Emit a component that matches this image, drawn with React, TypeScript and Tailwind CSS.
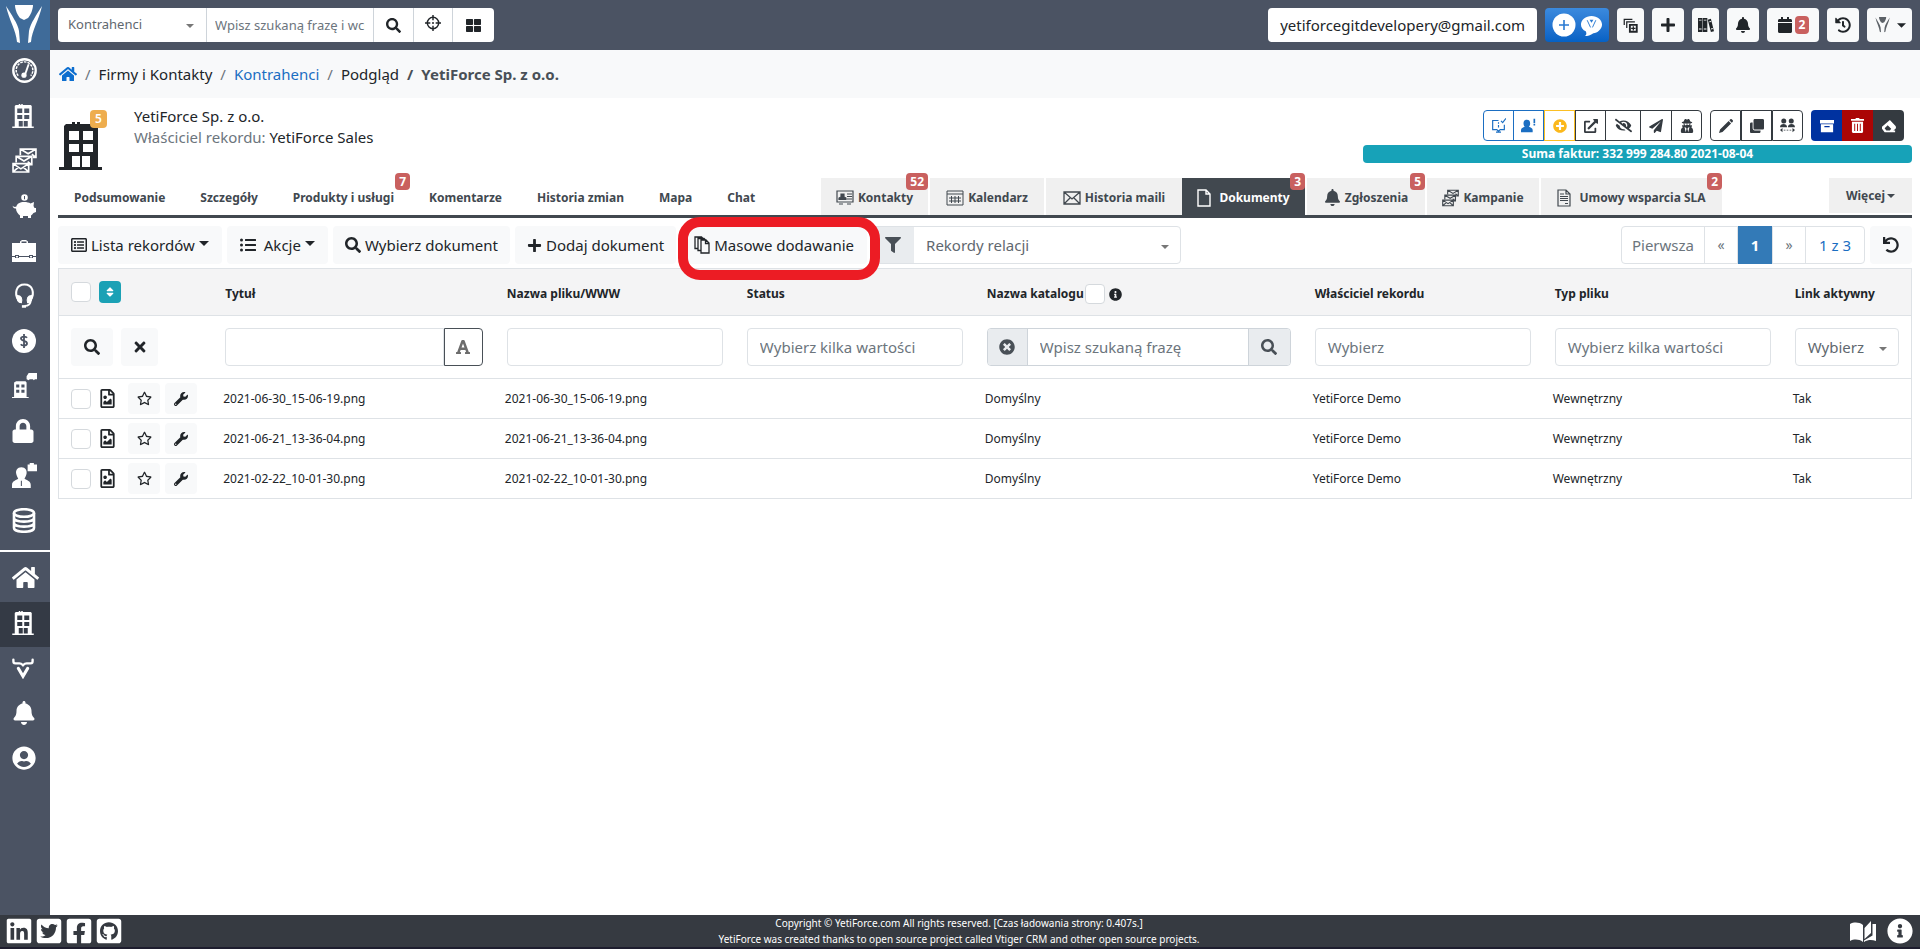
import React from 'react';
import {
  FaBell, FaCalendar, FaClone, FaExternalLinkAlt, FaEyeSlash,
  FaFacebookSquare, FaFilter, FaFont, FaGithubSquare, FaHistory, FaHome, FaInfoCircle, FaLinkedin,
  FaListUl, FaLock, FaPaperPlane, FaPlus, FaPlusCircle, FaRegFileImage, FaRegListAlt, FaRegStar,
  FaSearch, FaSort, FaThLarge, FaTimes, FaTimesCircle, FaTwitterSquare, FaUndo,
  FaUserCircle, FaUserSecret, FaWrench,
} from 'react-icons/fa';

type IconProps = { className?: string };

/* ---------- Custom icons ---------- */

const Caret = ({ className }: IconProps) => (
  <svg viewBox="0 0 10 5" className={className} fill="currentColor" aria-hidden="true">
    <path d="M0 0h10L5 5z" />
  </svg>
);

const YetiLogo = ({ className }: IconProps) => (
  <svg viewBox="0 0 50 50" className={className} fill="currentColor" aria-hidden="true">
    <path d="M15 5h18c0 5-3 11-5 13l-4 2-4-2c-2-2-5-8-5-13z" />
    <path d="M6 6c5 8 12 18 13 25l1 12-3-1C16 30 9 20 6 6z" />
    <path d="M42 6c-5 8-12 18-13 25l-1 12 3-1c1-12 8-22 11-36z" />
  </svg>
);

const BuildingIcon = ({ className }: IconProps) => (
  <svg viewBox="0 0 43 48" className={className} fill="currentColor" aria-hidden="true">
    <path
      fillRule="evenodd"
      d="M13 0h3v2h2V0h3v2h16l2 2v41h4v3H0v-3h5V4l2-2h6zM10 9v9h10V9zM24 9v9h10V9zM10 22v8h10v-8zM24 22v8h10v-8zM13 34v11h8V34zM23 34v11h8V34z"
    />
  </svg>
);

const MailsIcon = ({ className }: IconProps) => (
  <svg viewBox="0 0 24 24" className={className} fill="none" stroke="currentColor" strokeWidth="1.6" aria-hidden="true">
    <path d="M8 7V1h15v8h-3M8 1l7.500 4.500L23 1M23 9l-4-3" />
    <path d="M4 14V8h15v8h-3M4 8l7.500 4.500L19 8M19 16l-4-3" />
    <path d="M1 15h15v8H1zl7.500 5L16 15M1 23l5-4.500M16 23l-5-4.500" />
  </svg>
);

const PigIcon = ({ className }: IconProps) => (
  <svg viewBox="0 0 24 24" className={className} fill="currentColor" aria-hidden="true">
    <path fillRule="evenodd" d="M12.500.2a3.300 3.300 0 1 1 0 6.600 3.300 3.300 0 0 1 0-6.600zM12 2v3.200h1V2z" />
    <path d="M12 8c3 0 5 .5 6.500 1.500L22 8l-.5 4 1 2H24v4l-2.500 1c-1 1-1.500 2-2.500 2.500V24h-3v-2h-5v2H8v-2.500c-2-1.500-4-4-4-7-2 .5-3-1-3.500-3 1 1.500 2 1.500 3.700 1.300C5 9.500 8 8 12 8z" />
  </svg>
);

const BriefcaseIcon = ({ className }: IconProps) => (
  <svg viewBox="0 0 24 24" className={className} fill="currentColor" aria-hidden="true">
    <path
      fillRule="evenodd"
      d="M8 4V2.500L10 1h4l2 1.500V4h8v13h-3v-1h-4v1H7v-1H3v1H0V4zm1.500 0h5V2.500h-5zM0 18h3v1h4v-1h10v1h4v-1h3v5H0zM4 17h2v1.500H4zM18 17h2v1.500h-2z"
    />
  </svg>
);

const HeadsetIcon = ({ className }: IconProps) => (
  <svg viewBox="0 0 24 24" className={className} fill="none" stroke="currentColor" aria-hidden="true">
    <path d="M6 16C2 10 4 1.500 12 1.500S22 10 18 16" strokeWidth="2" />
    <path d="M18 16c0 4-2 6-6 6" strokeWidth="1.800" />
    <path d="M5 12c4 0 5 3 4 7-3 0-5-3-4-7zM19 12c-4 0-5 3-4 7 3 0 5-3 4-7z" fill="currentColor" />
    <path d="M9.500 22.500h4" strokeWidth="2.500" />
  </svg>
);

const DollarIcon = ({ className }: IconProps) => (
  <svg viewBox="0 0 24 24" className={className} aria-hidden="true">
    <circle cx="12" cy="12" r="12" fill="currentColor" />
    <path d="M15 8.800c-1-1.500-5.500-1.800-6 .5-.4 2.600 6 2.200 6 5.100 0 2.600-5 2.600-6.200.8M12 5v14" fill="none" stroke="#4b5363" strokeWidth="1.800" />
  </svg>
);

const SupplierIcon = ({ className }: IconProps) => (
  <svg viewBox="0 0 24 24" className={className} fill="currentColor" aria-hidden="true">
    <path fillRule="evenodd" d="M4 8h9l1 1v14h2v1H0v-1h2V9zm0 3v3h3v-3zm5 0v3h3v-3zM4 16v3h3v-3zm5 0v3h3v-3z" />
    <path d="M16 0h8v6h-2l-1 1-1-1h-3l-1 1-2-1V3z" />
  </svg>
);

const PersonCaseIcon = ({ className }: IconProps) => (
  <svg viewBox="0 0 24 24" className={className} fill="currentColor" aria-hidden="true">
    <path d="M9 4c4 0 5.500 3 5 6-.3 2-1.500 4-2 5 2 1.500 6 2 6 6v3H0v-3c0-4 4-4.500 6-6-.5-1-1.700-3-2-5-.5-3 1-6 5-6z" />
    <path d="M15 1.500h2V0h4v1.500h3V8h-9z" />
    <path d="M9 17v5" stroke="#4b5363" />
  </svg>
);

const DatabaseIcon = ({ className }: IconProps) => (
  <svg viewBox="0 0 24 25" className={className} fill="none" stroke="currentColor" strokeWidth="2.600" aria-hidden="true">
    <ellipse cx="12" cy="5" rx="10" ry="3.800" />
    <path d="M2 5v15c0 5 20 5 20 0V5M2 10c0 4.800 20 4.800 20 0M2 15c0 4.800 20 4.800 20 0" />
  </svg>
);

const BullIcon = ({ className }: IconProps) => (
  <svg viewBox="0 0 24 24" className={className} fill="none" stroke="currentColor" strokeWidth="2.600" strokeLinecap="round" aria-hidden="true">
    <path d="M1.500 3c0 3 0 4 2.500 4h4c2 0 3 1 4 2 1-1 2-2 4-2h4c2.500 0 2.500-1 2.500-4" />
    <path d="M7 12.500L12 21l5-8.500" strokeWidth="3.400" />
  </svg>
);

const TargetIcon = ({ className }: IconProps) => (
  <svg viewBox="0 0 24 24" className={className} fill="none" stroke="currentColor" strokeWidth="2.200" aria-hidden="true">
    <circle cx="12" cy="12" r="8.500" />
    <path d="M12 0v8M12 16v8M0 12h8M16 12h8" />
    <circle cx="12" cy="12" r="1.500" fill="currentColor" stroke="none" />
  </svg>
);

const GaugeIcon = ({ className }: IconProps) => (
  <svg viewBox="0 0 24 24" className={className} fill="none" stroke="currentColor" aria-hidden="true">
    <circle cx="12" cy="12" r="10.800" strokeWidth="2.200" />
    <path d="M6 17a8 8 0 1 1 12 0" strokeWidth="1.400" strokeDasharray="2.500 1" />
    <path d="M16 6l-3.500 10" strokeWidth="1.800" />
    <circle cx="11.500" cy="16.500" r="2" fill="currentColor" />
  </svg>
);

const ClonePlusIcon = ({ className }: IconProps) => (
  <svg viewBox="0 0 24 24" className={className} fill="none" stroke="currentColor" strokeWidth="2" aria-hidden="true">
    <path d="M2 11V2h13M6 16V6h13" />
    <path d="M11 11h11v11H11z" strokeWidth="3" />
    <path d="M16.500 13v7M13 16.500h7" />
  </svg>
);

const BooksIcon = ({ className }: IconProps) => (
  <svg viewBox="0 0 18 18" className={className} fill="currentColor" aria-hidden="true">
    <path fillRule="evenodd" d="M0 1h5v16H0zm1 2v1h3V3zm0 10v1h3v-1zM5.500 1h5v16h-5zm1 2v1h3V3zm0 10v1h3v-1zM11 3l3.500-1L18 16l-3.500 1zm1.500 2l.3 1 2-.5-.3-1zm2 8l.3 1 2-.5-.3-1z" />
  </svg>
);

const PencilIcon = ({ className }: IconProps) => (
  <svg viewBox="0 0 16 16" className={className} fill="currentColor" aria-hidden="true">
    <path d="M0 16l1.200-4L11 2.200 13.800 5 4 14.800zM11.800 1.400L13 .3c.5-.4 1-.4 1.500 0l1.200 1.200c.4.500.4 1 0 1.500l-1.100 1.200z" />
  </svg>
);

const CardIcon = ({ className }: IconProps) => (
  <svg viewBox="0 0 18 16" className={className} fill="none" stroke="currentColor" strokeWidth="1.200" aria-hidden="true">
    <path d="M1 1h16v11H1zM3 14h4M11 14h4M11 4h5M11 6.500h5M11 9h5" />
    <path d="M3 9.500V8l2-1V4h3v3l2 1v1.500z" fill="currentColor" />
  </svg>
);

const CalendarGridIcon = ({ className }: IconProps) => (
  <svg viewBox="0 0 18 16" className={className} fill="none" stroke="currentColor" aria-hidden="true">
    <path d="M1 1h16v14H1zM1 4h16M3 8h12M3 11h12M5.500 6v7M9 6v7M12.500 6v7" />
  </svg>
);

const EnvelopeIcon = ({ className }: IconProps) => (
  <svg viewBox="0 0 18 14" className={className} fill="none" stroke="currentColor" strokeWidth="1.300" aria-hidden="true">
    <path d="M1 1h16v12H1zl8 7 8-7M1 13l6-6M17 13l-6-6" />
  </svg>
);

const PageIcon = ({ className }: IconProps) => (
  <svg viewBox="0 0 14 18" className={className} fill="none" stroke="currentColor" strokeWidth="1.400" aria-hidden="true">
    <path d="M1 1h8l4 4v12H1zM9 1v4h4" />
  </svg>
);

const ContractIcon = ({ className }: IconProps) => (
  <svg viewBox="0 0 14 18" className={className} fill="none" stroke="currentColor" strokeWidth="1.200" aria-hidden="true">
    <path d="M1 1h8l4 4v12H1zM9 1v4h4M3 5h4M3 7.500h8M3 9.500h8M3 11.500h8M8 14.500h3" />
  </svg>
);

const PagesIcon = ({ className }: IconProps) => (
  <svg viewBox="0 0 16 18" className={className} fill="none" stroke="currentColor" strokeWidth="1.300" aria-hidden="true">
    <path d="M7 4h5l3 3v10H7zM11.500 4v3.500H15M7 14.500H4v-12h6L11.500 4M4 12.500H1V1h6.500l1.500 1.500" />
  </svg>
);

const ReadBoardIcon = ({ className }: IconProps) => (
  <svg viewBox="0 0 18 18" className={className} fill="none" stroke="currentColor" strokeWidth="1.400" aria-hidden="true">
    <path d="M9 3H2v11h5l2 2 2-2h5V8M9 5v2M9 8.500v3M6 17h6" />
    <path d="M12 3.500l2 2 4-5" />
  </svg>
);

const UserAlertIcon = ({ className }: IconProps) => (
  <svg viewBox="0 0 18 18" className={className} fill="currentColor" aria-hidden="true">
    <path d="M7 2c3 0 4 2 4 4.500 0 2-.8 3-1.500 4 2 1 4.500 1.500 4.500 4V17H0v-2.500c0-2.500 2.500-3 4.500-4-.7-1-1.500-2-1.500-4C3 4 4 2 7 2zM15 1h2v5h-2zM15 7h2v2h-2z" />
  </svg>
);

const TransferIcon = ({ className }: IconProps) => (
  <svg viewBox="0 0 18 18" className={className} fill="currentColor" aria-hidden="true">
    <circle cx="4.500" cy="3.500" r="3" />
    <circle cx="13.500" cy="3.500" r="3" />
    <path d="M0 11c0-5 8.500-5 8.500 0zM9.500 11c0-5 8.500-5 8.500 0z" />
    <path d="M0 14.500l3-2.500v5zM18 14.500L15 12v5zM4.500 14h2v1h-2zM8 14h2v1H8zM11.500 14h2v1h-2z" />
  </svg>
);

const ArchiveIcon = ({ className }: IconProps) => (
  <svg viewBox="0 0 16 16" className={className} fill="currentColor" aria-hidden="true">
    <path fillRule="evenodd" d="M0 1h16v4H0zM1 6h14v9H1zm4 2v1.500h6V8z" />
  </svg>
);

const TrashIcon = ({ className }: IconProps) => (
  <svg viewBox="0 0 14 16" className={className} fill="currentColor" aria-hidden="true">
    <path fillRule="evenodd" d="M4.500 1l1-1h3l1 1H14v2H0V1zM1 4h12v11l-1 1H2l-1-1zm2.500 2v8h1V6zm3 0v8h1V6zm3 0v8h1V6z" />
  </svg>
);

const EraserIcon = ({ className }: IconProps) => (
  <svg viewBox="0 0 16 16" className={className} fill="currentColor" aria-hidden="true">
    <path fillRule="evenodd" d="M9 1l6.500 7c.7 1 .6 2 0 3L13 13h2v2H3l-3-4c-.5-1-.3-1.800.3-2.500zM6.500 7L3 10.500 5 13h4l1.500-2z" />
  </svg>
);

const OpenBookIcon = ({ className }: IconProps) => (
  <svg viewBox="0 0 26 24" className={className} fill="currentColor" aria-hidden="true">
    <path d="M0 5c4-2 9-2 13 1v17c-4-3-9-3-13-1zM14.500 9L21 2v12l-6.500 6zM22.500 5H26v17c-4-1.500-8-1.500-12 1v-1.500l8.500-5z" />
  </svg>
);

/* ---------- Small building blocks ---------- */

const CountBadge = ({ value }: { value: string }) => (
  <span className="absolute -top-[5px] right-0 rounded bg-[#c9605f] px-1 text-xs leading-[17px] font-bold text-white">{value}</span>
);

const selectClass = 'h-full w-full appearance-none bg-transparent pr-5 text-[#5f686f] outline-none';

const TopButton = ({ label, className, children }: { label: string; className: string; children: React.ReactNode }) => (
  <button type="button" aria-label={label} className={`flex h-[34px] shrink-0 items-center justify-center rounded bg-[#f8f9fa] ${className}`}>
    {children}
  </button>
);

const ToolButton = ({ className = 'px-3', children }: { className?: string; children: React.ReactNode }) => (
  <button type="button" className={`flex h-[38px] items-center gap-1 rounded bg-[#f8f9fa] whitespace-nowrap ${className}`}>
    {children}
  </button>
);

/* ---------- Data ---------- */

const menuItems = [
  { label: 'Pulpit', icon: <GaugeIcon className="size-[25px]" /> },
  { label: 'Firmy i Kontakty', icon: <BuildingIcon className="h-6 w-[22px]" /> },
  { label: 'Marketing', icon: <MailsIcon className="size-[25px]" /> },
  { label: 'Sprzedaż', icon: <PigIcon className="size-6" /> },
  { label: 'Realizacja', icon: <BriefcaseIcon className="size-6" /> },
  { label: 'Wsparcie', icon: <HeadsetIcon className="size-[25px]" /> },
  { label: 'Księgowość', icon: <DollarIcon className="size-6" /> },
  { label: 'Dostawcy', icon: <SupplierIcon className="size-[25px]" /> },
  { label: 'Zabezpieczenia', icon: <FaLock className="h-6 w-[22px]" /> },
  { label: 'Kadry', icon: <PersonCaseIcon className="size-[25px]" /> },
  { label: 'Baza danych', icon: <DatabaseIcon className="h-[25px] w-6" /> },
];

const shortcutItems = [
  { label: 'Strona główna', icon: <FaHome className="size-[27px]" /> },
  { label: 'Kontrahenci', icon: <BuildingIcon className="h-6 w-[22px]" />, active: true },
  { label: 'YetiForce', icon: <BullIcon className="size-[22px]" /> },
  { label: 'Powiadomienia', icon: <FaBell className="size-6" /> },
  { label: 'Profil', icon: <FaUserCircle className="size-6" /> },
];

const leftTabs = [
  { label: 'Podsumowanie' },
  { label: 'Szczegóły' },
  { label: 'Produkty i usługi', count: '7' },
  { label: 'Komentarze' },
  { label: 'Historia zmian' },
  { label: 'Mapa' },
  { label: 'Chat' },
];

const relatedTabs = [
  { label: 'Kontakty', count: '52', width: 'w-[107px]', icon: <CardIcon className="h-4 w-[18px]" /> },
  { label: 'Kalendarz', width: 'w-[114px]', icon: <CalendarGridIcon className="h-4 w-[18px]" /> },
  { label: 'Historia maili', width: 'w-[136px]', icon: <EnvelopeIcon className="h-[14px] w-[18px]" /> },
  { label: 'Dokumenty', count: '3', width: 'w-[123px]', active: true, icon: <PageIcon className="mr-1 h-[18px] w-[14px]" /> },
  { label: 'Zgłoszenia', count: '5', width: 'w-[118px]', icon: <FaBell className="size-[17px]" /> },
  { label: 'Kampanie', width: 'w-[112px]', icon: <MailsIcon className="h-[18px] w-[17px]" /> },
  { label: 'Umowy wsparcia SLA', count: '2', width: 'w-[181px]', icon: <ContractIcon className="mr-1 h-[18px] w-[14px]" /> },
];

const documents = ['2021-06-30_15-06-19.png', '2021-06-21_13-36-04.png', '2021-02-22_10-01-30.png'];

const columns = [
  { label: '', width: 'w-[8.35%]' },
  { label: 'Tytuł', width: 'w-[15.2%]' },
  { label: 'Nazwa pliku/WWW', width: 'w-[12.95%]' },
  { label: 'Status', width: 'w-[12.95%]' },
  { label: 'Nazwa katalogu', width: 'w-[17.7%]' },
  { label: 'Właściciel rekordu', width: 'w-[12.95%]' },
  { label: 'Typ pliku', width: 'w-[12.95%]' },
  { label: 'Link aktywny', width: '' },
];

const checkboxClass = 'size-5 shrink-0 appearance-none rounded border border-[#d5d9dd] bg-white';
const fieldClass = 'h-[38px] w-full min-w-0 rounded border border-[#dee2e6] bg-white px-3 outline-none placeholder:text-[#6c757d]';

/* ---------- Page sections ---------- */

const Sidebar = () => (
  <aside className="flex w-[50px] shrink-0 flex-col bg-[#4b5363] text-white">
    <a href="#" aria-label="YetiForce" className="block size-[50px] bg-[#3f6b99]">
      <YetiLogo className="size-[50px]" />
    </a>
    <nav className="pb-[5px]">
      {menuItems.map((item) => (
        <a key={item.label} href="#" aria-label={item.label} className="flex h-[45px] items-center pb-1 pl-3">
          {item.icon}
        </a>
      ))}
    </nav>
    <nav className="border-t-2 border-white pt-[5px]">
      {shortcutItems.map((item) => (
        <a key={item.label} href="#" aria-label={item.label} className={`flex h-[45px] items-center pb-1 pl-3 ${item.active ? 'bg-[#343a45]' : ''}`}>
          {item.icon}
        </a>
      ))}
    </nav>
  </aside>
);

const TopBar = () => (
  <header className="flex h-[50px] items-center gap-2 bg-[#4b5363] px-2 text-[#212529]">
    <div className="flex h-[34px] divide-x divide-[#ced4da] overflow-hidden rounded bg-white text-[13px]">
      <div className="relative w-[149px] pl-[10px]">
        <select aria-label="Moduł" className={selectClass}>
          <option>Kontrahenci</option>
        </select>
        <Caret className="pointer-events-none absolute top-[16px] right-3 h-1 w-2 text-[#777]" />
      </div>
      <div className="w-[167px] px-2">
        <input aria-label="Wyszukiwanie" placeholder="Wpisz szukaną frazę i wciśnij enter" className="h-full w-full outline-none placeholder:text-[#6c757d]" />
      </div>
      <button type="button" aria-label="Szukaj" className="flex w-10 items-center justify-center"><FaSearch className="size-[15px]" /></button>
      <button type="button" aria-label="Namierz" className="flex w-[39px] items-center justify-center pb-1"><TargetIcon className="size-4" /></button>
      <button type="button" aria-label="Zaawansowane" className="flex w-[41px] items-center justify-center"><FaThLarge className="size-[15px]" /></button>
    </div>
    <div className="ml-auto flex items-center gap-2">
      <button type="button" className="h-[34px] rounded bg-white px-3 text-[15px]">yetiforcegitdevelopery@gmail.com</button>
      <button type="button" aria-label="Dodaj rozmowę" className="flex h-[34px] w-16 items-center justify-center gap-1 rounded bg-linear-to-b from-[#3b8ade] to-[#0561c4]">
        <svg viewBox="0 0 24 24" className="size-6" aria-hidden="true">
          <circle cx="12" cy="12" r="11.500" fill="#fff" />
          <path d="M12 7v10M7 12h10" stroke="#2a7ad2" strokeWidth="1.600" />
        </svg>
        <svg viewBox="0 0 24 24" className="size-[23px]" aria-hidden="true">
          <path d="M12 2c6 0 11 4 11 9s-5 9-9 9c-3 2-6 3-9 3 2-1 2-3 1-5-3-1-5-4-5-7 0-5 5-9 11-9z" fill="#fff" />
          <path d="M10 6h4l-2 3z" fill="#2a7ad2" />
          <path d="M7.500 6.500L11 14M16.500 6.500L13 14" stroke="#2a7ad2" />
        </svg>
      </button>
      <TopButton label="Szybkie kopiowanie" className="w-[27px]"><ClonePlusIcon className="size-[15px]" /></TopButton>
      <TopButton label="Dodaj" className="w-8"><FaPlus className="size-4" /></TopButton>
      <TopButton label="Biblioteka" className="w-[27px]"><BooksIcon className="size-4" /></TopButton>
      <TopButton label="Powiadomienia" className="w-8"><FaBell className="size-4" /></TopButton>
      <TopButton label="Kalendarz" className="w-[52px] gap-[2px]">
        <FaCalendar className="size-4" />
        <span className="rounded bg-[#c9605f] px-1 text-xs leading-[18px] font-bold text-white">2</span>
      </TopButton>
      <TopButton label="Historia" className="w-8"><FaHistory className="size-4" /></TopButton>
      <TopButton label="Konto" className="w-[45px] gap-1">
        <YetiLogo className="size-5 text-[#5c6167]" />
        <Caret className="h-[5px] w-[9px]" />
      </TopButton>
    </div>
  </header>
);

const Breadcrumb = () => (
  <nav aria-label="Okruszki" className="flex h-12 items-center gap-2 bg-[#f8f9fa] px-[9px] text-[15px] text-[#212529]">
    <a href="#" aria-label="Strona główna" className="text-[#0c6ecf]"><FaHome className="size-[18px]" /></a>
    <span className="text-[#6c757d]">/</span>
    <span>Firmy i Kontakty</span>
    <span className="text-[#6c757d]">/</span>
    <a href="#" className="text-[#1b6ec2]">Kontrahenci</a>
    <span className="text-[#6c757d]">/</span>
    <span>Podgląd</span>
    <span className="font-bold text-[#495057]">/</span>
    <span className="font-bold text-[#495057]">YetiForce Sp. z o.o.</span>
  </nav>
);

const RecordHeader = () => (
  <div className="flex h-20 items-start pt-3">
    <div className="relative mt-3 ml-px">
      <BuildingIcon className="h-12 w-[43px] text-[#212529]" />
      <span className="absolute -top-3 left-[31px] rounded bg-[#eead4e] px-[5px] text-xs leading-[18px] font-semibold text-white">5</span>
    </div>
    <div className="ml-8 text-[15px] leading-[21px]">
      <h1 className="-mt-1">YetiForce Sp. z o.o.</h1>
      <p className="text-[#6c757d]">Właściciel rekordu: <a href="#" className="text-[#212529]">YetiForce Sales</a></p>
    </div>
    <div className="ml-auto flex w-[549px] flex-col items-end">
      <div className="mr-2 flex gap-2 text-[#343a40]">
        <div className="flex [&>button]:flex [&>button]:h-[31px] [&>button]:w-[31px] [&>button]:items-center [&>button]:justify-center [&>button]:border [&>button]:border-[#343a40]">
          <button type="button" aria-label="Przeczytane" className="rounded-l !border-[#1b6ec2] text-[#1b6ec2]"><ReadBoardIcon className="size-[15px]" /></button>
          <button type="button" aria-label="Opiekun" className="-ml-px !border-[#1b6ec2] text-[#1b6ec2]"><UserAlertIcon className="size-[15px]" /></button>
          <button type="button" aria-label="Dodaj" className="!border-[#fbbf24] text-[#fbb81c]"><FaPlusCircle className="size-[14px]" /></button>
          <button type="button" aria-label="Otwórz"><FaExternalLinkAlt className="size-[14px]" /></button>
          <button type="button" aria-label="Ukryj" className="-ml-px !w-9"><FaEyeSlash className="size-[17px]" /></button>
          <button type="button" aria-label="Wyślij" className="-ml-px !w-8"><FaPaperPlane className="size-[14px]" /></button>
          <button type="button" aria-label="Prywatność" className="-ml-px rounded-r"><FaUserSecret className="size-[14px]" /></button>
        </div>
        <div className="flex [&>button]:flex [&>button]:h-[31px] [&>button]:w-[31px] [&>button]:items-center [&>button]:justify-center [&>button]:border [&>button]:border-[#343a40]">
          <button type="button" aria-label="Edytuj" className="rounded-l"><PencilIcon className="size-[14px]" /></button>
          <button type="button" aria-label="Duplikuj"><FaClone className="size-[14px]" /></button>
          <button type="button" aria-label="Przenieś" className="rounded-r"><TransferIcon className="size-[15px]" /></button>
        </div>
        <div className="flex overflow-hidden rounded text-white [&>button]:flex [&>button]:h-[31px] [&>button]:w-[31px] [&>button]:items-center [&>button]:justify-center">
          <button type="button" aria-label="Archiwizuj" className="bg-[#0032a0]"><ArchiveIcon className="size-[14px]" /></button>
          <button type="button" aria-label="Kosz" className="bg-[#ab0505]"><TrashIcon className="h-[15px] w-[13px]" /></button>
          <button type="button" aria-label="Usuń" className="bg-[#343a40]"><EraserIcon className="size-[14px]" /></button>
        </div>
      </div>
      <div className="mt-1 w-full rounded bg-[#17a2b8] text-center text-xs leading-[18px] font-bold text-white">
        Suma faktur: 332 999 284.80 2021-08-04
      </div>
    </div>
  </div>
);

const Tabs = () => (
  <nav aria-label="Zakładki" className="flex h-10 border-b-3 border-[#41484f] text-xs font-bold text-[#41484f]">
    <div className="flex">
      {leftTabs.map((tab) => (
        <a key={tab.label} href="#" className="relative mr-[3px] flex items-center px-4 pt-[2px] whitespace-nowrap">
          {tab.label}
          {tab.count && <CountBadge value={tab.count} />}
        </a>
      ))}
    </div>
    <div className="ml-auto flex gap-[2px]">
      {relatedTabs.map((tab) => (
        <a
          key={tab.label}
          href="#"
          className={`relative flex items-center justify-center gap-1 pt-[2px] whitespace-nowrap ${tab.width} ${tab.active ? '-ml-[2px] bg-[#41484f] text-white' : 'bg-[#f0f0f0]'}`}
        >
          {tab.icon}
          {tab.label}
          {tab.count && <CountBadge value={tab.count} />}
        </a>
      ))}
    </div>
    <button type="button" className="ml-[107px] flex h-[35px] w-[83px] items-center justify-center gap-[2px] bg-[#f0f0f0]">
      Więcej
      <Caret className="h-1 w-2" />
    </button>
  </nav>
);

const Toolbar = () => (
  <div className="mt-2 flex gap-[5px] text-[15px]">
    <ToolButton className="px-[13px]"><FaRegListAlt className="size-4" />Lista rekordów<Caret className="-mt-1 h-[5px] w-[10px]" /></ToolButton>
    <ToolButton className="px-[13px]"><FaListUl className="mr-1 size-4" />Akcje<Caret className="-mt-1 h-[5px] w-[10px]" /></ToolButton>
    <ToolButton><FaSearch className="size-4" />Wybierz dokument</ToolButton>
    <ToolButton><FaPlus className="size-[15px]" />Dodaj dokument</ToolButton>
    <div className="relative">
      <ToolButton className="px-[13px]"><PagesIcon className="h-[18px] w-4" />Masowe dodawanie</ToolButton>
      {/* Highlight frame around the bulk-add button */}
      <div className="pointer-events-none absolute -top-[9px] -right-[13px] -bottom-4 -left-[3px] z-10 rounded-[22px] border-10 border-[#ec1c24]" />
    </div>
    <div className="flex h-[38px] w-[309px] overflow-hidden rounded border border-[#dee2e6]">
      <span className="flex w-[41px] items-center bg-[#e9ecef] pl-3"><FaFilter className="size-4 text-[#495057]" /></span>
      <div className="relative flex-1 pl-3">
        <select aria-label="Filtr" className={selectClass}>
          <option>Rekordy relacji</option>
        </select>
        <Caret className="pointer-events-none absolute top-[18px] right-[11px] h-1 w-2 text-[#777]" />
      </div>
    </div>
    <div className="ml-auto flex h-[38px] divide-x divide-[#dee2e6] rounded border border-[#dee2e6] text-[#6c757d]">
      <button type="button" className="w-[83px]">Pierwsza</button>
      <button type="button" aria-label="Poprzednia" className="w-[33px] text-sm">«</button>
      <button type="button" className="-my-px w-[35px] bg-[#337ab7] font-bold text-white">1</button>
      <button type="button" aria-label="Następna" className="w-[33px] text-sm">»</button>
      <button type="button" className="w-[58px] text-[#1b6ec2]">1 z 3</button>
    </div>
    <button type="button" aria-label="Odśwież" className="flex h-[38px] w-[42px] items-center justify-center rounded bg-[#f8f9fa]"><FaUndo className="size-4" /></button>
  </div>
);

const DocumentsTable = () => (
  <table className="mt-1 w-full table-fixed border-collapse border border-[#dee2e6] text-xs">
    <thead>
      <tr className="h-[47px] border-b border-[#dee2e6] bg-[#f4f4f5] text-left">
        {columns.map((column, i) => (
          <th key={i} className={`px-3 pt-1 font-bold whitespace-nowrap ${column.width}`}>
            {i === 0 && (
              <div className="-mt-1 flex items-center gap-2">
                <input type="checkbox" aria-label="Zaznacz wszystko" className={checkboxClass} />
                <button type="button" aria-label="Sortuj" className="flex size-[22px] items-center justify-center rounded bg-[#1ba1b5] text-white"><FaSort className="size-3" /></button>
              </div>
            )}
            {column.label === 'Nazwa katalogu' ? (
              <label className="flex items-center">
                {column.label}
                <input type="checkbox" className={`${checkboxClass} mr-1 ml-px`} />
                <FaInfoCircle className="size-[13px]" />
              </label>
            ) : column.label}
          </th>
        ))}
      </tr>
    </thead>
    <tbody>
      <tr className="h-[63px] border-b border-[#dee2e6] text-[15px] [&>td]:px-3">
        <td>
          <div className="flex gap-2">
            <button type="button" aria-label="Szukaj" className="flex h-[38px] w-[42px] items-center justify-center rounded bg-[#f8f9fa]"><FaSearch className="size-4" /></button>
            <button type="button" aria-label="Wyczyść" className="flex h-[38px] w-[37px] items-center justify-center rounded bg-[#f8f9fa]"><FaTimes className="size-4" /></button>
          </div>
        </td>
        <td>
          <div className="flex">
            <input aria-label="Tytuł" className={`${fieldClass} rounded-r-none border-[#ced4da]`} />
            <button type="button" aria-label="Wielkość liter" className="flex w-[39px] shrink-0 items-center justify-center rounded-r border border-[#495057] text-[#6c6c6c]"><FaFont className="size-4" /></button>
          </div>
        </td>
        <td><input aria-label="Nazwa pliku" className={`${fieldClass} border-[#ced4da]`} /></td>
        <td><input aria-label="Status" placeholder="Wybierz kilka wartości" className={fieldClass} /></td>
        <td>
          <div className="flex h-[38px] divide-x divide-[#ced4da] overflow-hidden rounded border border-[#ced4da] text-[#495057]">
            <button type="button" aria-label="Wyczyść katalog" className="flex w-10 shrink-0 items-center justify-center bg-[#e9ecef]"><FaTimesCircle className="size-4" /></button>
            <input aria-label="Katalog" placeholder="Wpisz szukaną frazę" className="min-w-0 flex-1 px-3 outline-none placeholder:text-[#6c757d]" />
            <button type="button" aria-label="Szukaj katalogu" className="flex w-[41px] shrink-0 items-center justify-center bg-[#e9ecef]"><FaSearch className="size-4" /></button>
          </div>
        </td>
        <td><input aria-label="Właściciel" placeholder="Wybierz" className={fieldClass} /></td>
        <td><input aria-label="Typ pliku" placeholder="Wybierz kilka wartości" className={fieldClass} /></td>
        <td>
          <div className="relative h-[38px] rounded border border-[#dee2e6] pl-3">
            <select aria-label="Link aktywny" className={selectClass}>
              <option>Wybierz</option>
            </select>
            <Caret className="pointer-events-none absolute top-[18px] right-[11px] h-1 w-2 text-[#777]" />
          </div>
        </td>
      </tr>
      {documents.map((name) => (
        <tr key={name} className="h-10 border-b border-[#dee2e6] [&>td]:px-[10px]">
          <td>
            <div className="flex items-center pl-[2px]">
              <input type="checkbox" aria-label={`Zaznacz ${name}`} className={checkboxClass} />
              <FaRegFileImage className="ml-[7px] size-[19px]" />
              <button type="button" aria-label="Ulubione" className="ml-[11px] flex h-[31px] w-8 items-center justify-center rounded bg-[#f8f9fa]"><FaRegStar className="size-[15px]" /></button>
              <button type="button" aria-label="Narzędzia" className="ml-[5px] flex h-[31px] w-8 items-center justify-center rounded bg-[#f8f9fa]"><FaWrench className="size-[14px]" /></button>
            </div>
          </td>
          <td>{name}</td>
          <td>{name}</td>
          <td />
          <td>Domyślny</td>
          <td>YetiForce Demo</td>
          <td>Wewnętrzny</td>
          <td>Tak</td>
        </tr>
      ))}
    </tbody>
  </table>
);

const Footer = () => (
  <footer className="flex h-[34px] items-center border-b-2 border-[#1e1d2e] bg-[#363a41] pr-[7px] pl-[5px] text-white">
    <div className="flex flex-1 gap-[2px]">
      <a href="#" aria-label="LinkedIn"><FaLinkedin className="size-7" /></a>
      <a href="#" aria-label="Twitter"><FaTwitterSquare className="size-7" /></a>
      <a href="#" aria-label="Facebook"><FaFacebookSquare className="size-7" /></a>
      <a href="#" aria-label="GitHub"><FaGithubSquare className="size-7" /></a>
    </div>
    <div className="text-center text-[10px] leading-4">
      <p>Copyright © YetiForce.com All rights reserved. [Czas ładowania strony: 0.407s.]</p>
      <p>YetiForce was created thanks to open source project called Vtiger CRM and other open source projects.</p>
    </div>
    <div className="flex flex-1 items-center justify-end gap-[11px]">
      <a href="#" aria-label="Dokumentacja"><OpenBookIcon className="h-6 w-[26px]" /></a>
      <a href="#" aria-label="Informacje"><FaInfoCircle className="size-[26px]" /></a>
    </div>
  </footer>
);

const App: React.FC = () => (
  <div className="flex min-h-screen flex-col bg-white font-['Noto_Sans','Open_Sans',sans-serif] text-[#212529]">
    <div className="flex flex-1">
      <Sidebar />
      <div className="min-w-0 flex-1">
        <TopBar />
        <Breadcrumb />
        <main className="px-2">
          <RecordHeader />
          <Tabs />
          <Toolbar />
          <DocumentsTable />
        </main>
      </div>
    </div>
    <Footer />
  </div>
);

export default App;
